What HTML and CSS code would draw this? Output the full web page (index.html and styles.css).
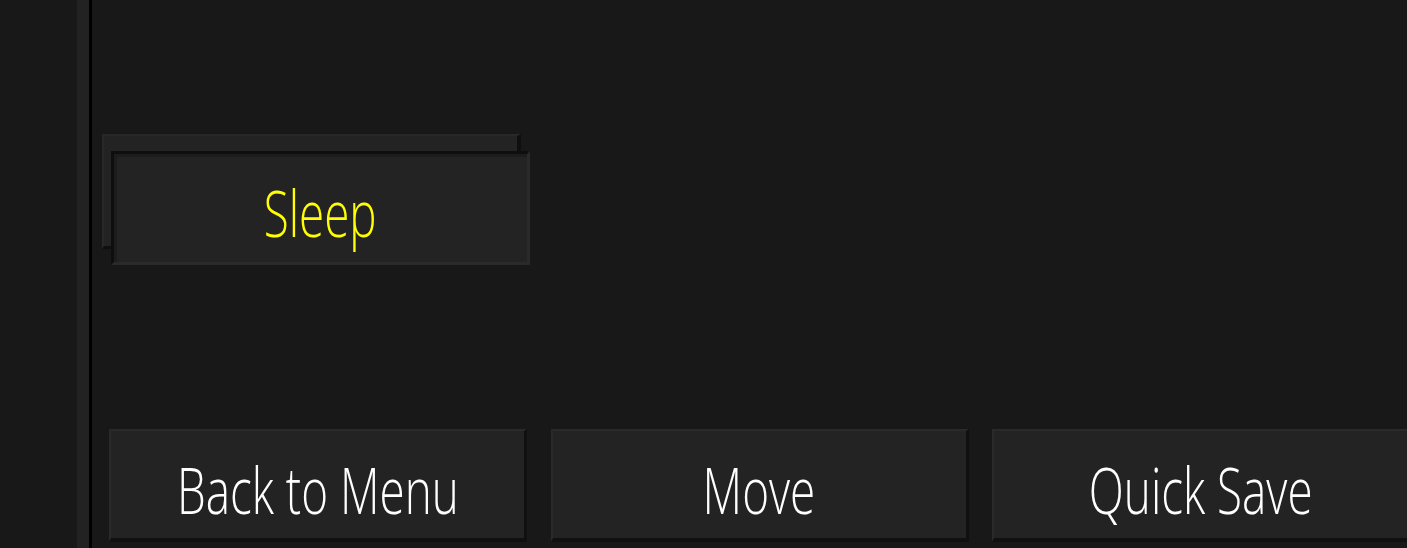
FILE: index.html
```html
<!DOCTYPE html>
<html>
<head>
<meta charset="utf-8">
<link rel="stylesheet" href="styles.css">
</head>
<body>
<div class="screen">
  <div class="gutter"></div>
  <div class="stripe"></div>
  <div class="divider"></div>
  <main class="main">
    <div class="card-stack">
      <div class="card-back"></div>
      <button class="card-front"><span class="label label-yellow">Sleep</span></button>
    </div>
    <div class="actions">
      <button class="btn"><span class="label">Back to Menu</span></button>
      <button class="btn"><span class="label">Move</span></button>
      <button class="btn"><span class="label">Quick Save</span></button>
    </div>
  </main>
</div>
</body>
</html>
```

FILE: styles.css
```css
* { box-sizing: border-box; }
html, body {
  margin: 0;
  padding: 0;
  background: #181818;
  width: 1407px;
  height: 548px;
  overflow: hidden;
}
.screen {
  display: flex;
  height: 548px;
}
.gutter {
  width: 77px;
  flex-shrink: 0;
  background: #181818;
}
.stripe {
  width: 12px;
  flex-shrink: 0;
  background: #222222;
}
.divider {
  width: 3px;
  flex-shrink: 0;
  background: #000000;
}
.main {
  flex: 1;
  display: flex;
  flex-direction: column;
  padding-top: 134px;
  padding-bottom: 6px;
  overflow: hidden;
}
.card-stack {
  display: grid;
  margin-left: 10px;
  width: 428px;
}
.card-back {
  grid-area: 1 / 1;
  margin-right: 9px;
  margin-bottom: 16px;
  height: 115px;
  background: #232323;
  border-top: 2px solid #282828;
  border-left: 2px solid #282828;
  border-right: 4px solid #0f0f0f;
  border-bottom: 3px solid #0f0f0f;
}
.card-front {
  grid-area: 1 / 1;
  margin-left: 9px;
  margin-top: 17px;
  height: 114px;
  background: #232323;
  border: none;
  border-top: 3px solid #0e0e0e;
  border-left: 3px solid #0e0e0e;
  border-right: 3px solid #2a2a2a;
  border-bottom: 3px solid #2a2a2a;
  box-shadow: inset 3px 3px 0 #1c1c1c;
  display: flex;
  align-items: center;
  justify-content: center;
  padding: 8px 0 0 0;
  margin-right: 0;
}
.actions {
  margin-top: auto;
  margin-left: 17px;
  display: flex;
  gap: 23.5px;
}
.btn {
  flex-shrink: 0;
  width: 418px;
  height: 113px;
  background: #232323;
  border: none;
  border-top: 2px solid #2a2a2a;
  border-left: 2px solid #2a2a2a;
  border-right: 3px solid #101010;
  border-bottom: 4px solid #101010;
  display: flex;
  align-items: center;
  justify-content: center;
  padding: 9px 0 0 0;
  margin: 0;
}
.label {
  display: inline-block;
  font-family: "Open Sans", "Noto Sans", sans-serif;
  font-weight: 300;
  font-size: 65px;
  line-height: 1;
  color: #ffffff;
  transform: scaleX(0.705);
  white-space: nowrap;
}
.label-yellow {
  color: #ffff00;
}
```
